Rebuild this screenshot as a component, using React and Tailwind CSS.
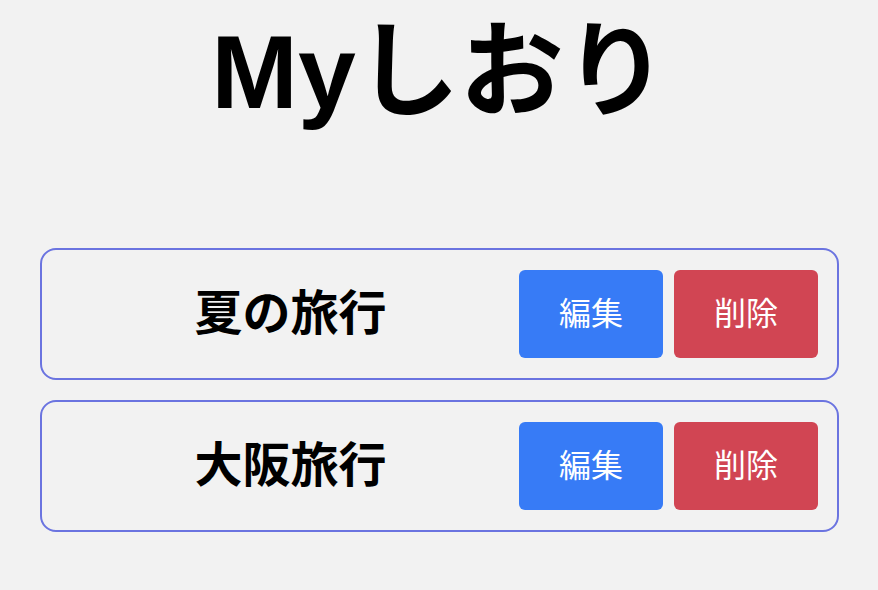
import React from 'react';

const trips = [
  { id: 1, name: '夏の旅行' },
  { id: 2, name: '大阪旅行' },
];

const jp = { fontFamily: '"Liberation Sans", "Noto Sans CJK JP", sans-serif' };

const App = () => {
  return (
    <div className="min-h-[590px] bg-[#f2f2f2] pl-10 pr-[39px]" style={jp}>
      <h1 className="pt-[14px] text-center text-[104px] font-bold leading-[116px] text-black">Myしおり</h1>

      <div className="mt-[118px] space-y-5">
        {trips.map(trip => (
          <div
            key={trip.id}
            className="flex items-center rounded-2xl border-2 border-[#6b74e0] py-5 pl-5 pr-[19px]"
          >
            <h2 className="flex-1 text-center text-[48px] font-bold text-black">{trip.name}</h2>
            <div className="flex gap-[11px]">
              <button className="h-[88px] w-[144px] rounded-md bg-[#377bf6] text-[32px] text-white">編集</button>
              <button className="h-[88px] w-[144px] rounded-md bg-[#d14553] text-[32px] text-white">削除</button>
            </div>
          </div>
        ))}
      </div>
    </div>
  );
};

export default App;
